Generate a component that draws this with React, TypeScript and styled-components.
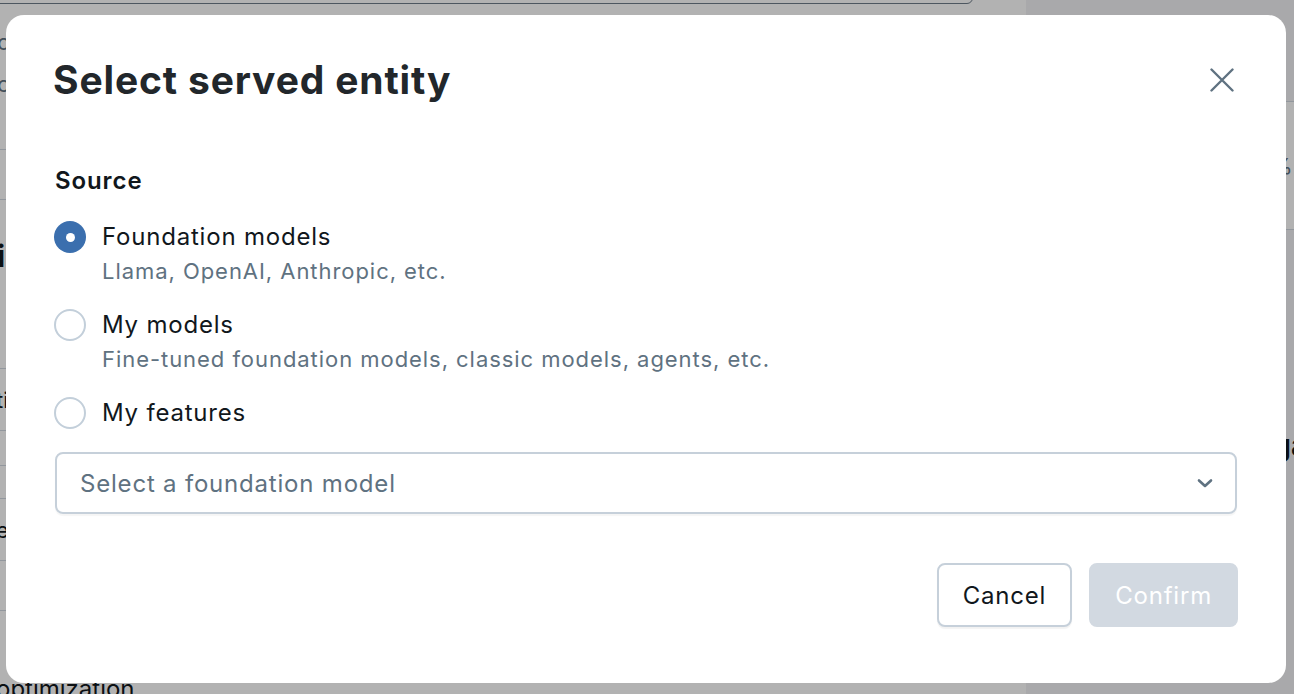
import React from "react";
import styled, { createGlobalStyle } from "styled-components";

const Global = createGlobalStyle`
  html, body { margin: 0; padding: 0; }
  body {
    width: 1294px;
    height: 694px;
    overflow: hidden;
    font-family: Inter, "Noto Sans", "Liberation Sans", sans-serif;
    background: #ffffff;
  }
`;

/* ---------- background page (dimmed behind the dialog) ---------- */
const Page = styled.div`
  display: flex;
  width: 1294px;
  height: 694px;
  overflow: hidden;
`;

const Main = styled.div`
  flex: 0 0 1040px;
  display: flex;
  flex-direction: column;
  margin-left: -14px;
  background: #ffffff;
`;

const TopInput = styled.div`
  height: 40px;
  margin: -38px 53px 17px 0;
  border: 1px solid #6f7d8a;
  border-radius: 6px;
`;

const MetaLine = styled.div`
  height: 42px;
  display: flex;
  align-items: center;
  font-size: 22px;
  color: #5f7281;
  padding-left: 11px;
`;

const Row = styled.div<{ $h: number }>`
  height: ${(p) => p.$h}px;
  box-sizing: border-box;
  border-bottom: 1px solid #d1d9e1;
  display: flex;
  align-items: center;
  font-size: 22px;
  color: #11171c;
  padding-left: 10px;
`;

const BigHeading = styled.div`
  height: 112px;
  display: flex;
  align-items: center;
  font-size: 30px;
  font-weight: 700;
  color: #11171c;
  padding-left: 11px;
`;

const BottomText = styled.div`
  margin-top: auto;
  font-size: 24px;
  color: #11171c;
  padding-left: 10px;
  line-height: 26px;
  transform: translateY(8px);
`;

const Side = styled.div`
  flex: 1;
  background: #f3f3f5;
  display: flex;
  flex-direction: column;
`;

const SideRow = styled.div<{ $h: number; $light?: boolean }>`
  height: ${(p) => p.$h}px;
  box-sizing: border-box;
  border-bottom: 1px solid #d1d9e1;
  background: ${(p) => (p.$light ? "#ffffff" : "transparent")};
  display: flex;
  align-items: center;
  font-size: 22px;
  color: #5f7281;
  padding-left: 245px;
`;

const SideHeading = styled.div`
  height: 430px;
  display: flex;
  align-items: center;
  font-size: 30px;
  font-weight: 700;
  color: #11171c;
  padding-left: 246px;
`;

/* ---------- dialog ---------- */
const Overlay = styled.div`
  position: fixed;
  inset: 0;
  background: rgba(0, 0, 0, 0.3);
  display: flex;
  justify-content: flex-start;
  align-items: flex-start;
  padding: 15px 0 0 6px;
`;

const Dialog = styled.div`
  width: 1280px;
  height: 668px;
  box-sizing: border-box;
  background: #ffffff;
  border-radius: 18px;
  padding: 41px 49px 0 49px;
  display: flex;
  flex-direction: column;
`;

const Header = styled.div`
  display: flex;
  align-items: center;
  justify-content: space-between;
  height: 48px;
`;

const Title = styled.h2`
  margin: 0 0 0 -2px;
  font-size: 39px;
  line-height: 48px;
  font-weight: 700;
  color: #22272b;
  letter-spacing: 0.85px;
`;

const CloseButton = styled.button`
  width: 40px;
  height: 40px;
  margin-right: -5px;
  border: none;
  background: transparent;
  padding: 0;
  display: flex;
  align-items: center;
  justify-content: center;
  cursor: pointer;
`;

const SectionLabel = styled.div`
  margin-top: 61px;
  font-size: 24px;
  line-height: 32px;
  font-weight: 600;
  color: #11171c;
  letter-spacing: 0.9px;
`;

const RadioList = styled.div`
  margin-top: 24px;
  display: flex;
  flex-direction: column;
  gap: 22px;
`;

const Option = styled.label`
  display: grid;
  grid-template-columns: 32px 1fr;
  column-gap: 16px;
  row-gap: 2px;
  align-items: center;
  margin-left: -1px;
  cursor: pointer;
`;

const RadioCircle = styled.span<{ $checked: boolean }>`
  width: 32px;
  height: 32px;
  box-sizing: border-box;
  border-radius: 50%;
  border: ${(p) => (p.$checked ? "none" : "2px solid #c3cfda")};
  background: ${(p) => (p.$checked ? "#3b6fae" : "#ffffff")};
  display: flex;
  align-items: center;
  justify-content: center;
  &::after {
    content: "";
    display: ${(p) => (p.$checked ? "block" : "none")};
    width: 9px;
    height: 9px;
    border-radius: 50%;
    background: #ffffff;
  }
`;

const OptionTitle = styled.span`
  font-size: 24px;
  line-height: 32px;
  color: #11171c;
  letter-spacing: 0.8px;
`;

const OptionHint = styled.span`
  grid-column: 2;
  font-size: 22px;
  line-height: 32px;
  color: #5f7281;
  letter-spacing: 0.95px;
`;

const SelectBox = styled.div`
  margin-top: 23px;
  height: 62px;
  box-sizing: border-box;
  border: 2px solid #c6d0da;
  border-radius: 8px;
  box-shadow: 0 2px 1px rgba(0, 0, 0, 0.04);
  display: flex;
  align-items: center;
  justify-content: space-between;
  padding: 0 21px 0 23px;
`;

const Placeholder = styled.span`
  font-size: 24px;
  color: #5f7281;
  letter-spacing: 0.8px;
`;

const Footer = styled.div`
  margin-top: 49px;
  display: flex;
  justify-content: flex-end;
  gap: 17px;
  margin-right: -1px;
`;

const Button = styled.button<{ $primary?: boolean }>`
  height: 64px;
  box-sizing: border-box;
  padding: 0 24px;
  border-radius: 8px;
  font-family: inherit;
  font-size: 24px;
  letter-spacing: 0.8px;
  border: 2px solid ${(p) => (p.$primary ? "#d2d9e1" : "#c6d0da")};
  background: ${(p) => (p.$primary ? "#d2d9e1" : "#ffffff")};
  color: ${(p) => (p.$primary ? "#ffffff" : "#11171c")};
  box-shadow: ${(p) => (p.$primary ? "none" : "0 2px 1px rgba(0,0,0,0.05)")};
  cursor: pointer;
`;

const options = [
  { title: "Foundation models", hint: "Llama, OpenAI, Anthropic, etc.", checked: true },
  { title: "My models", hint: "Fine-tuned foundation models, classic models, agents, etc.", checked: false },
  { title: "My features", hint: "", checked: false },
];

export default function App() {
  return (
    <>
      <Global />
      <Page>
        <Main>
          <TopInput />
          <MetaLine>owner</MetaLine>
          <MetaLine>created</MetaLine>
          <Row $h={45} />
          <Row $h={50} />
          <BigHeading>iInformation</BigHeading>
          <Row $h={57} />
          <Row $h={62}>tions</Row>
          <Row $h={35} />
          <Row $h={33} />
          <Row $h={62}>en</Row>
          <Row $h={50} />
          <BottomText>optimization</BottomText>
        </Main>
        <Side>
          <SideRow $h={102} />
          <SideRow $h={128} $light>%</SideRow>
          <SideHeading>gateway</SideHeading>
        </Side>
      </Page>
      <Overlay>
        <Dialog role="dialog" aria-label="Select served entity">
          <Header>
            <Title>Select served entity</Title>
            <CloseButton aria-label="Close">
              <svg width="24" height="24" viewBox="0 0 24 24" fill="none">
                <path d="M1.5 1.5L22.5 22.5M22.5 1.5L1.5 22.5" stroke="#5f7281" strokeWidth="2.4" strokeLinecap="round" />
              </svg>
            </CloseButton>
          </Header>
          <SectionLabel>Source</SectionLabel>
          <RadioList>
            {options.map((o) => (
              <Option key={o.title}>
                <RadioCircle $checked={o.checked} />
                <OptionTitle>{o.title}</OptionTitle>
                {o.hint && <OptionHint>{o.hint}</OptionHint>}
              </Option>
            ))}
          </RadioList>
          <SelectBox>
            <Placeholder>Select a foundation model</Placeholder>
            <svg width="18" height="12" viewBox="0 0 18 12" fill="none">
              <path d="M3 3.5L9 9L15 3.5" stroke="#5f7281" strokeWidth="2.6" strokeLinecap="round" strokeLinejoin="round" />
            </svg>
          </SelectBox>
          <Footer>
            <Button>Cancel</Button>
            <Button $primary>Confirm</Button>
          </Footer>
        </Dialog>
      </Overlay>
    </>
  );
}
